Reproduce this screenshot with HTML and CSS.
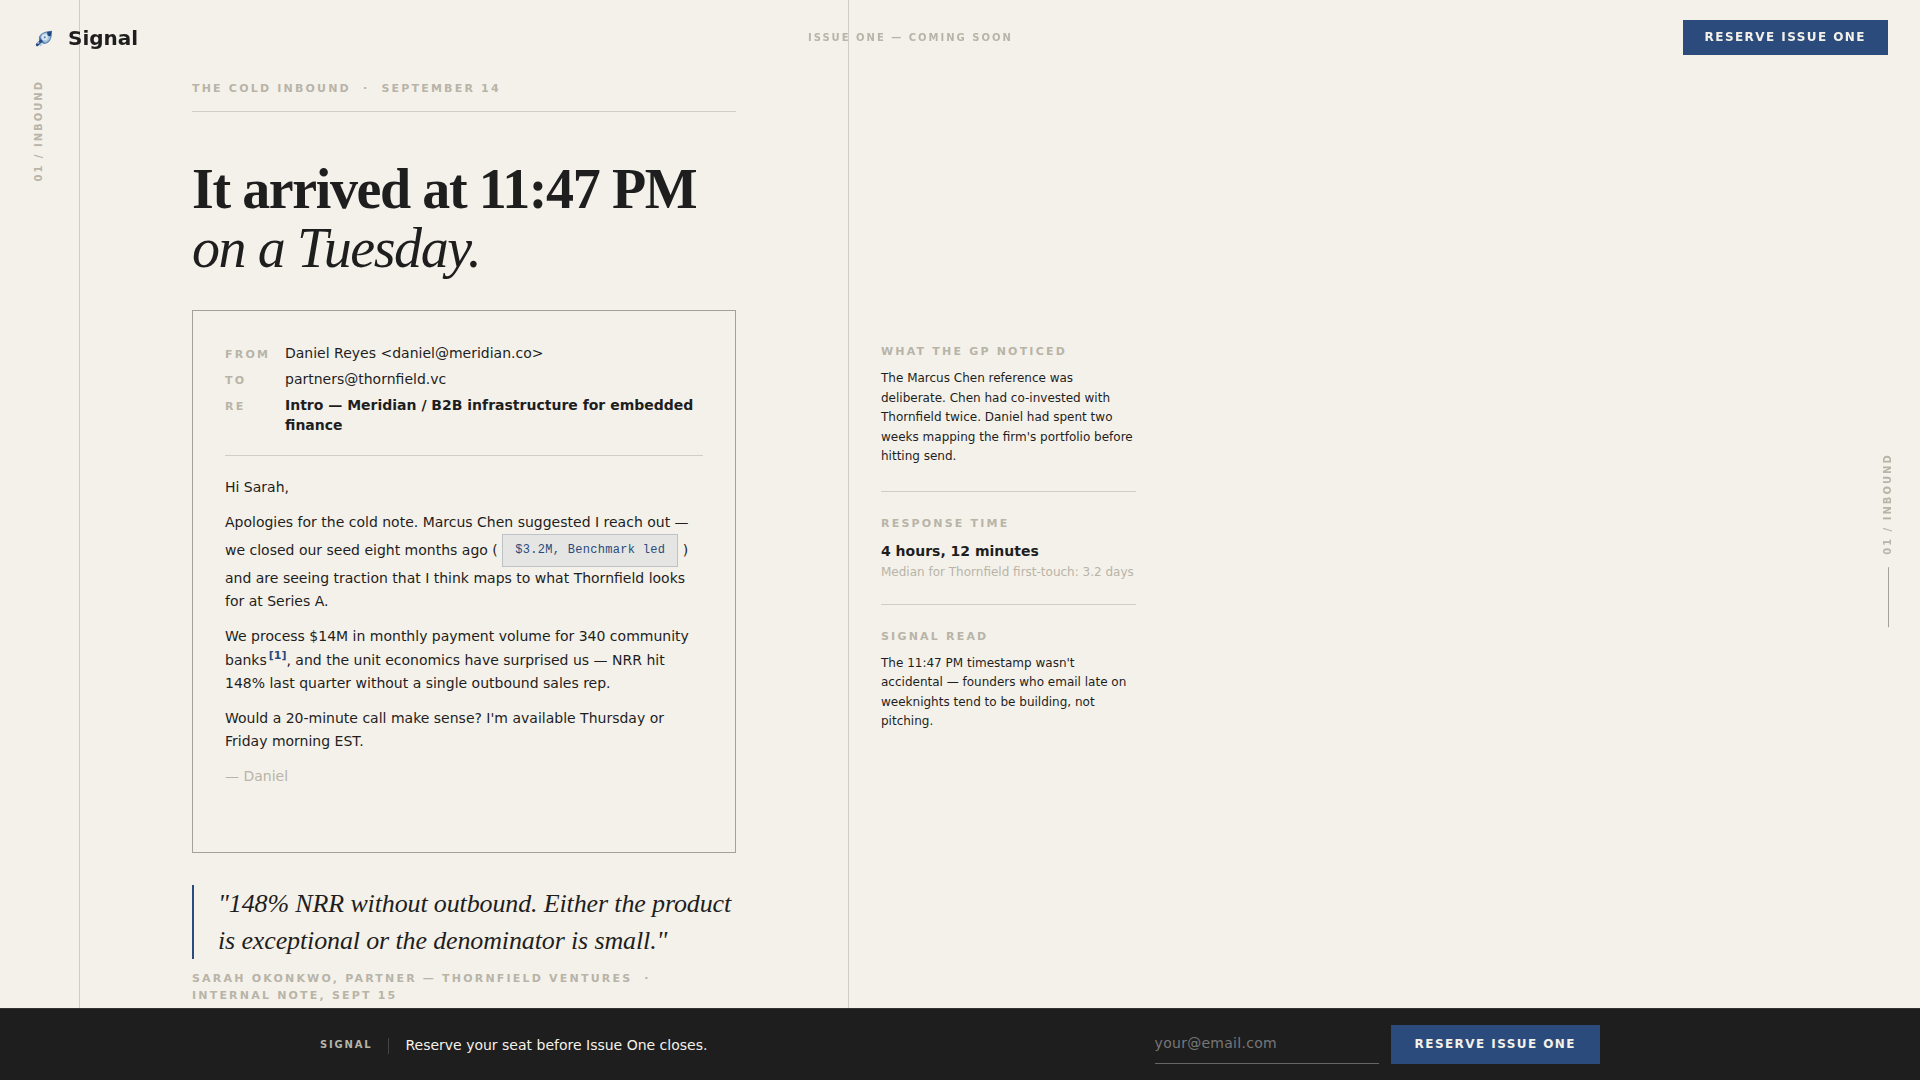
FILE: index.html
```html
<!DOCTYPE html>
<html lang="en">
<head>
  <meta charset="UTF-8" />
  <meta name="viewport" content="width=device-width, initial-scale=1.0" />
  <title>Signal — Issue One</title>
  <link rel="stylesheet" href="styles.css">
</head>
<body>
  <header class="topbar">
    <a class="logo" href="#">
      <svg class="logo-mark" viewBox="0 0 24 24" aria-hidden="true">
        <path d="M6 15C5 9 9 4 22 3c0 11-4 17-11 16z" fill="#a9c4df" stroke="#5f87b3" stroke-width="1.5" />
        <path d="M16 4l6-1-1 7-4-1z" fill="#234a80" />
        <path d="M6 9l1 8 7 2-5-4z" fill="#3f6da3" />
        <circle cx="13" cy="11" r="4" fill="#dce8f2" />
        <circle cx="13" cy="11" r="1.5" fill="#5f87b3" />
        <path d="M8 16l-5 5" stroke="#234a80" stroke-width="4" stroke-linecap="round" />
        <path d="M5 18l-1 1M9 20l-2 2" stroke="#a9c4df" stroke-width="2" stroke-linecap="round" />
      </svg>
      <span>Signal</span>
    </a>
    <p class="issue label">Issue One — Coming Soon</p>
    <button class="btn" type="button">Reserve Issue One</button>
  </header>

  <main class="panel">
    <div class="rail">
      <span class="vertical label">01 / Inbound</span>
    </div>

    <article class="story">
      <p class="kicker label">The Cold Inbound &nbsp;·&nbsp; September 14</p>
      <h1>It arrived at 11:47 PM<br><em>on a Tuesday.</em></h1>

      <section class="email">
        <dl class="email-head">
          <dt class="label">From</dt>
          <dd>Daniel Reyes &lt;daniel@meridian.co&gt;</dd>
          <dt class="label">To</dt>
          <dd>partners@thornfield.vc</dd>
          <dt class="label">Re</dt>
          <dd class="subject">Intro — Meridian / B2B infrastructure for embedded finance</dd>
        </dl>
        <div class="email-body">
          <p>Hi Sarah,</p>
          <p>Apologies for the cold note. Marcus Chen suggested I reach out — we closed our seed eight months ago ( <span class="chip">$3.2M, Benchmark led</span> ) and are seeing traction that I think maps to what Thornfield looks for at Series A.</p>
          <p>We process $14M in monthly payment volume for 340 community banks<sup>[1]</sup>, and the unit economics have surprised us — NRR hit 148% last quarter without a single outbound sales rep.</p>
          <p>Would a 20-minute call make sense? I'm available Thursday or Friday morning EST.</p>
          <p class="signoff">— Daniel</p>
        </div>
      </section>

      <blockquote>"148% NRR without outbound. Either the product is exceptional or the denominator is small."</blockquote>
      <p class="cite label">Sarah Okonkwo, Partner — Thornfield Ventures &nbsp;·&nbsp; Internal note, Sept 15</p>
    </article>

    <aside class="notes">
      <section>
        <h2 class="label">What the GP noticed</h2>
        <p>The Marcus Chen reference was deliberate. Chen had co-invested with Thornfield twice. Daniel had spent two weeks mapping the firm's portfolio before hitting send.</p>
      </section>
      <section>
        <h2 class="label">Response time</h2>
        <p class="stat">4 hours, 12 minutes</p>
        <p class="stat-note">Median for Thornfield first-touch: 3.2 days</p>
      </section>
      <section>
        <h2 class="label">Signal read</h2>
        <p>The 11:47 PM timestamp wasn't accidental — founders who email late on weeknights tend to be building, not pitching.</p>
      </section>
    </aside>
  </main>

  <div class="progress">
    <span class="vertical label">01 / Inbound</span>
    <span class="progress-line"></span>
  </div>

  <footer class="bottombar">
    <form class="signup">
      <span class="brand label">Signal</span>
      <label class="pitch" for="email">Reserve your seat before Issue One closes.</label>
      <input id="email" type="email" placeholder="your@email.com">
      <button class="btn btn-large" type="button">Reserve Issue One</button>
    </form>
  </footer>
</body>
</html>
```

FILE: styles.css
```css
:root {
  --paper: #f4f1ea;
  --ink: #1e1e1e;
  --muted: #b8b4a8;
  --rule: #d0cdc6;
  --frame: #a3a19c;
  --blue: #2a4b7c;
}

* {
  box-sizing: border-box;
  margin: 0;
  padding: 0;
}

body {
  font-family: "DejaVu Sans", sans-serif;
  font-size: 14px;
  line-height: 20px;
  background: var(--paper);
  color: var(--ink);
}

.label {
  font-size: 11px;
  font-weight: bold;
  line-height: 17px;
  letter-spacing: 0.2em;
  text-transform: uppercase;
  color: var(--muted);
}

.btn {
  padding: 10px 22px;
  font-family: inherit;
  font-size: 12px;
  font-weight: bold;
  line-height: 15px;
  letter-spacing: 0.12em;
  text-transform: uppercase;
  background: var(--blue);
  color: var(--paper);
  border: none;
  cursor: pointer;
}

.btn-large {
  padding: 12px 24px;
}

/* top bar */
.topbar {
  position: fixed;
  top: 0;
  left: 0;
  right: 0;
  z-index: 2;
  display: flex;
  align-items: center;
  justify-content: space-between;
  padding: 20px 32px;
}

.logo {
  display: flex;
  align-items: center;
  gap: 12px;
  font-size: 20px;
  font-weight: bold;
  color: var(--ink);
  text-decoration: none;
}

.logo-mark {
  width: 24px;
  height: 24px;
  padding: 3px;
}

.issue {
  font-size: 10px;
}

/* panel */
.panel {
  display: grid;
  grid-template-columns: 80px 40% 320px;
  min-height: 100vh;
}

.rail {
  display: flex;
  justify-content: center;
  align-items: flex-start;
  padding: 80px 2px 0 0;
  border-right: 1px solid var(--rule);
}

.vertical {
  font-size: 10px;
  line-height: 16px;
  writing-mode: vertical-rl;
  transform: rotate(180deg);
}

.story {
  padding: 80px 112px;
}

.kicker {
  padding-bottom: 14px;
  border-bottom: 1px solid var(--rule);
}

h1 {
  margin: 48px 0 32px;
  font-family: "Liberation Serif", serif;
  font-size: 56px;
  line-height: 59px;
  letter-spacing: -0.025em;
}

h1 em {
  font-weight: normal;
}

.email {
  padding: 32px 32px 52px;
  border: 1px solid var(--frame);
}

.email-head {
  display: grid;
  grid-template-columns: 60px 1fr;
  row-gap: 6px;
  align-items: baseline;
  padding-bottom: 20px;
  border-bottom: 1px solid var(--rule);
}

.subject {
  font-weight: bold;
}

.email-body {
  padding-top: 20px;
  line-height: 23px;
}

.email-body p {
  margin-bottom: 12px;
}

.chip {
  display: inline-block;
  padding: 5px 12px;
  font-family: "Liberation Mono", monospace;
  font-size: 12px;
  line-height: 21px;
  letter-spacing: 0.025em;
  vertical-align: middle;
  background: #e5e5e3;
  border: 1px solid #bcc1ca;
  color: var(--blue);
}

sup {
  margin-left: 2px;
  font-size: 11px;
  font-weight: bold;
  line-height: 15px;
  color: var(--blue);
}

.signoff {
  color: var(--muted);
}

blockquote {
  margin-top: 32px;
  padding-left: 24px;
  border-left: 2px solid var(--blue);
  font-family: "Liberation Serif", serif;
  font-size: 26px;
  font-style: italic;
  line-height: 37px;
  letter-spacing: -0.005em;
}

.cite {
  margin-top: 11px;
}

/* side notes */
.notes {
  display: flex;
  flex-direction: column;
  justify-content: center;
  padding: 80px 32px 88px;
  border-left: 1px solid var(--rule);
  font-size: 12px;
  line-height: 1.625;
}

.notes section + section {
  margin-top: 24px;
  padding-top: 24px;
  border-top: 1px solid var(--rule);
}

.notes h2 {
  margin-bottom: 9px;
  line-height: 16px;
}

.stat {
  font-size: 14px;
  font-weight: bold;
  line-height: 20px;
}

.stat-note {
  margin-top: 4px;
  line-height: 15px;
  color: var(--muted);
}

/* section progress */
.progress {
  position: fixed;
  top: 50%;
  right: 24px;
  z-index: 2;
  display: flex;
  flex-direction: column;
  align-items: center;
  gap: 12px;
  transform: translateY(-50%);
}

.progress-line {
  width: 1px;
  height: 60px;
  background: var(--frame);
}

/* bottom bar */
.bottombar {
  position: fixed;
  left: 0;
  right: 0;
  bottom: 0;
  z-index: 3;
  padding: 16px 32px;
  background: var(--ink);
  border-top: 1px solid #33332f;
}

.signup {
  display: flex;
  align-items: center;
  max-width: 1280px;
  margin: 0 auto;
}

.brand {
  font-size: 10px;
  letter-spacing: 0.18em;
}

.pitch {
  margin-left: 16px;
  margin-right: auto;
  color: var(--paper);
}

.pitch::before {
  content: "";
  display: inline-block;
  width: 1px;
  height: 16px;
  margin-right: 16px;
  vertical-align: middle;
  background: #444444;
}

.signup input {
  width: 224px;
  height: 39px;
  margin-right: 12px;
  padding-bottom: 2px;
  font-family: inherit;
  font-size: 14px;
  letter-spacing: 0.02em;
  background: transparent;
  color: var(--paper);
  border: none;
  border-bottom: 1px solid #666666;
  outline: none;
}

.signup input::placeholder {
  color: #777777;
}
```
